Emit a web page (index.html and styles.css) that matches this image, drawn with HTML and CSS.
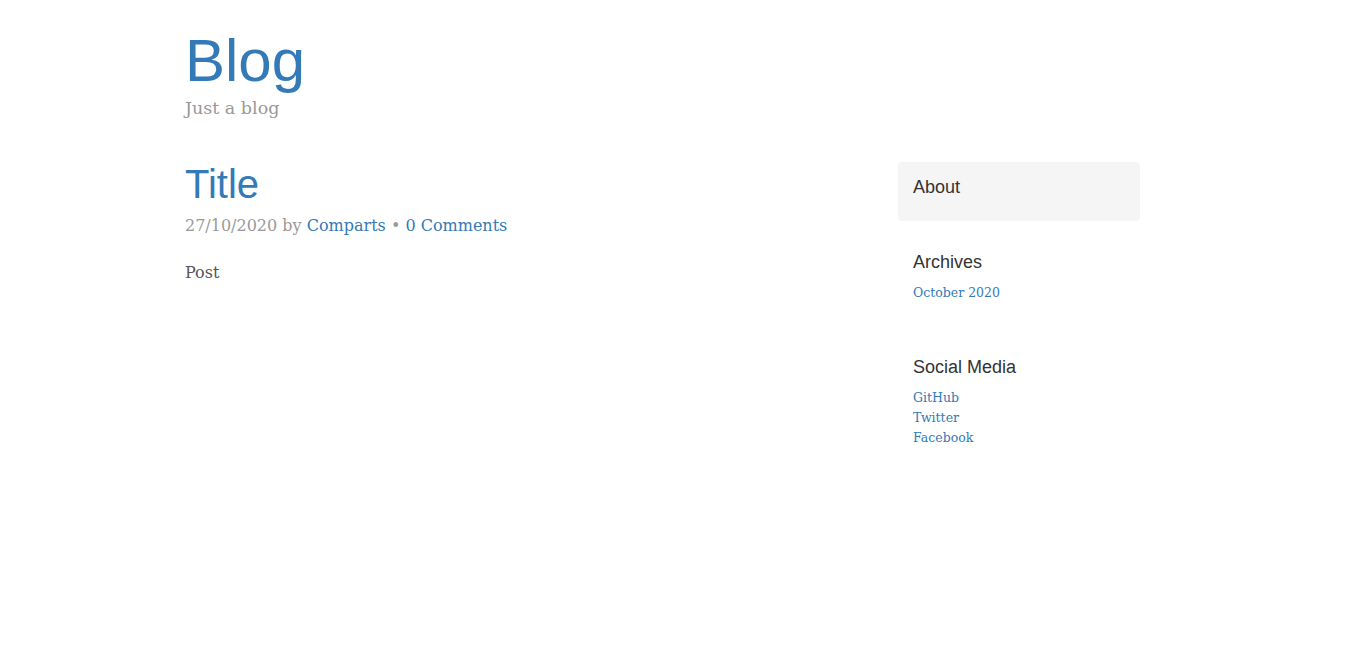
FILE: index.html
```html
<!DOCTYPE html>
<html lang="en">
<head>
<meta charset="utf-8">
<title>Blog</title>
<link rel="stylesheet" href="styles.css">
</head>
<body>
<div class="container">
  <header class="blog-header">
    <h1 class="blog-title"><a href="#">Blog</a></h1>
    <p class="blog-description">Just a blog</p>
  </header>
  <div class="row">
    <main class="blog-main">
      <article class="blog-post">
        <h2 class="blog-post-title"><a href="#">Title</a></h2>
        <p class="blog-post-meta">27/10/2020 by <a href="#">Comparts</a> &bull; <a href="#">0 Comments</a></p>
        <p class="blog-post-body">Post</p>
      </article>
    </main>
    <aside class="blog-sidebar">
      <div class="sidebar-module sidebar-module-inset">
        <h4>About</h4>
        <p></p>
      </div>
      <div class="sidebar-module">
        <h4>Archives</h4>
        <ol class="list-unstyled">
          <li><a href="#">October 2020</a></li>
        </ol>
      </div>
      <div class="sidebar-module">
        <h4>Social Media</h4>
        <ol class="list-unstyled">
          <li><a href="#">GitHub</a></li>
          <li><a href="#">Twitter</a></li>
          <li><a href="#">Facebook</a></li>
        </ol>
      </div>
    </aside>
  </div>
</div>
</body>
</html>
```

FILE: styles.css
```css
* { box-sizing: border-box; }
html, body { margin: 0; padding: 0; background: #fff; }
body {
  font-family: "DejaVu Serif", Georgia, serif;
  font-size: 12.5px;
  line-height: 20px;
  color: #555;
}
a { color: #337ab7; text-decoration: none; }

.container {
  width: 975px;
  margin-left: 185px;
}

.blog-header {
  padding-top: 31px;
  padding-bottom: 40px;
}
.blog-title {
  margin: 0;
  font-family: "Liberation Sans", Arial, sans-serif;
  font-size: 60px;
  font-weight: normal;
  line-height: 60px;
}
.blog-description {
  margin: 3px 0 0;
  font-size: 17.5px;
  line-height: 28px;
  color: #999;
}

.row {
  display: flex;
  align-items: flex-start;
}
.blog-main {
  width: 713px;
  font-size: 16px;
  line-height: 27px;
}
.blog-post-title {
  margin: 0 0 5px;
  font-family: "Liberation Sans", Arial, sans-serif;
  font-size: 40px;
  font-weight: normal;
  line-height: 44px;
}
.blog-post-meta {
  margin: 0 0 20px;
  padding-top: 1px;
  color: #999;
}
.blog-post-body {
  margin: 0 0 10px;
}

.blog-sidebar {
  width: 242px;
}
.sidebar-module {
  padding: 15px;
  margin-bottom: 15px;
}
.sidebar-module-inset {
  background: #f5f5f5;
  border-radius: 4px;
  margin-bottom: 17px;
}
.sidebar-module h4 {
  margin: 0 0 11px;
  font-family: "Liberation Sans", Arial, sans-serif;
  font-size: 18px;
  font-weight: normal;
  line-height: 19px;
  color: #333;
}
.sidebar-module-inset h4 {
  padding-top: 1px;
  margin-bottom: 9px;
}
.sidebar-module p { margin: 0; }
.list-unstyled {
  list-style: none;
  padding: 0;
  margin: 0 0 10px;
}
```
